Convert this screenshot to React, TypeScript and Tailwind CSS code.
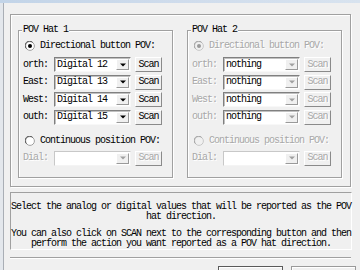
import React from "react";

interface Row {
  label: string;
  value: string;
}

interface GroupProps {
  title: string;
  rows: Row[];
  disabled?: boolean;
}

const hat1: Row[] = [
  { label: "orth:", value: "Digital 12" },
  { label: "East:", value: "Digital 13" },
  { label: "West:", value: "Digital 14" },
  { label: "outh:", value: "Digital 15" },
];

const hat2: Row[] = [
  { label: "orth:", value: "nothing" },
  { label: "East:", value: "nothing" },
  { label: "West:", value: "nothing" },
  { label: "outh:", value: "nothing" },
];

function Radio({ checked, disabled }: { checked?: boolean; disabled?: boolean }) {
  return (
    <svg width="10" height="10" viewBox="0 0 10 10" className="shrink-0">
      <circle cx="5" cy="5" r="4.4" fill={disabled ? "#f0f0f0" : "#fff"} stroke={disabled ? "#c8c8c8" : "#a0a0a0"} strokeWidth="1" />
      <path d="M1.4 7.6 A4.1 4.1 0 0 1 7.6 1.4" stroke={disabled ? "#a0a0a0" : "#505050"} strokeWidth="1" fill="none" />
      {checked && <circle cx="5" cy="5" r="2" fill={disabled ? "#9a9a9a" : "#000"} />}
    </svg>
  );
}

function Combo({ value, disabled, dim }: { value: string; disabled?: boolean; dim?: boolean }) {
  // dim = whole control greyed (Dial), disabled = grey arrow only
  return (
    <div
      className={
        "w-[77px] h-[15px] flex items-center justify-between pl-[2px] pr-[1px] bg-white border " +
        (dim
          ? "border-[#c8c8c8] border-b-[#f4f4f4] border-r-[#f4f4f4]"
          : "border-[#808080] border-b-[#f8f8f8] border-r-[#f8f8f8] shadow-[inset_1px_1px_0_#c0c0c0]")
      }
    >
      <span className="text-black leading-[10px]">{value}</span>
      <div className="w-[13px] h-[11px] flex items-center justify-center bg-[#f0f0f0] border border-t-white border-l-white border-b-[#9a9a9a] border-r-[#9a9a9a]">
        <svg width="6" height="4" viewBox="0 0 6 4">
          <path d="M0 0.5h6L3 3.5z" fill={disabled || dim ? "#a0a0a0" : "#000"} />
        </svg>
      </div>
    </div>
  );
}

function ScanButton({ disabled }: { disabled?: boolean }) {
  return (
    <div
      className={
        "ml-[4px] w-[27px] h-[15px] flex items-center justify-center bg-[#f0f0f0] border border-t-white border-l-white border-b-[#8a8a8a] border-r-[#8a8a8a] leading-[10px] " +
        (disabled ? "text-[#a8a8a8] [text-shadow:1px_1px_0_#fff]" : "text-black")
      }
    >
      Scan
    </div>
  );
}

function HatGroup({ title, rows, disabled }: GroupProps) {
  const labelColor = disabled ? "text-[#a8a8a8] [text-shadow:1px_1px_0_#fff]" : "text-black";
  return (
    <div className="relative w-[155px] h-[148px] border border-[#a0a0a0] shadow-[inset_1px_1px_0_#fff,1px_1px_0_#fff] flex flex-col">
      {/* Legend */}
      <div className="absolute left-[3px] -top-[6px] px-[1px] bg-[#f0f0f0] leading-[10px] text-black">{title}</div>

      {/* Directional radio */}
      <div className="mt-[9px] h-[12px] flex items-center pl-[6px]">
        <Radio checked disabled={disabled} />
        <span className={"ml-[5px] leading-[10px] " + labelColor}>Directional button POV:</span>
      </div>

      {/* Direction rows */}
      {rows.map((r, i) => (
        <div key={r.label} className={"h-[15px] flex items-center " + (i === 0 ? "mt-[5px]" : "mt-[2.5px]")}>
          <span className={"w-[35px] pl-[4px] leading-[10px] " + labelColor}>{r.label}</span>
          <Combo value={r.value} disabled={disabled} />
          <ScanButton disabled={disabled} />
        </div>
      ))}

      {/* Continuous radio */}
      <div className="mt-[10.5px] h-[12px] flex items-center pl-[6px]">
        <Radio disabled={disabled} />
        <span className={"ml-[5px] leading-[10px] " + labelColor}>Continuous position POV:</span>
      </div>

      {/* Dial */}
      <div className="mt-[3.5px] h-[15px] flex items-center">
        <span className="w-[35px] pl-[4px] leading-[10px] text-[#a8a8a8] [text-shadow:1px_1px_0_#fff]">Dial:</span>
        <Combo value="" dim />
        <ScanButton disabled />
      </div>
    </div>
  );
}

export default function App() {
  return (
    <div className="w-[360px] h-[270px] overflow-hidden bg-[#f0f0f0] flex flex-col font-['Liberation_Mono',monospace] text-[10px] tracking-[-1px]">
      {/* title bar edge */}
      <div className="h-[3px] shrink-0 bg-gradient-to-r from-[#c2d4e8] via-[#cfdcec] to-[#d8e3ef]" />
      <div className="flex flex-1">
        {/* window frame */}
        <div className="w-[4px] shrink-0 bg-[#e3e7ec] border-r border-[#a9aeb5]" />

        <div className="flex flex-col pl-[6px] pt-[11px]">
          {/* Hats panel */}
          <div className="w-[341px] h-[173px] shrink-0 border border-[#a0a0a0] shadow-[inset_1px_1px_0_#fff,1px_1px_0_#fff] flex gap-[14px] pl-[7px] pt-[15px]">
            <HatGroup title="POV Hat 1" rows={hat1} />
            <HatGroup title="POV Hat 2" rows={hat2} disabled />
          </div>

          {/* Help text */}
          <div className="mt-[5px] w-[342px] h-[58px] shrink-0 border border-t-[#a0a0a0] border-l-[#a0a0a0] border-b-white border-r-white pt-[9px] text-center leading-[10px] text-black">
            <div className="whitespace-nowrap">Select the analog or digital values that will be reported as the POV</div>
            <div className="whitespace-nowrap">hat direction.</div>
            <div className="whitespace-nowrap mt-[7px]">You can also click on SCAN next to the corresponding button and then</div>
            <div className="whitespace-nowrap">perform the action you want reported as a POV hat direction.</div>
          </div>

          {/* separator */}
          <div className="mt-[7px] w-[341px] h-[2px] shrink-0 border-t border-[#a0a0a0] border-b border-b-white" />

          {/* buttons (cut off) */}
          <div className="mt-[7px] ml-[208px] flex gap-[8px]">
            <div className="w-[65px] h-[20px] border border-[#5a5a5a] bg-[#f0f0f0] shadow-[inset_1px_1px_0_#fff]" />
            <div className="w-[65px] h-[20px] border border-[#9a9a9a] bg-[#f0f0f0] shadow-[inset_1px_1px_0_#fff]" />
          </div>
        </div>
      </div>
    </div>
  );
}
